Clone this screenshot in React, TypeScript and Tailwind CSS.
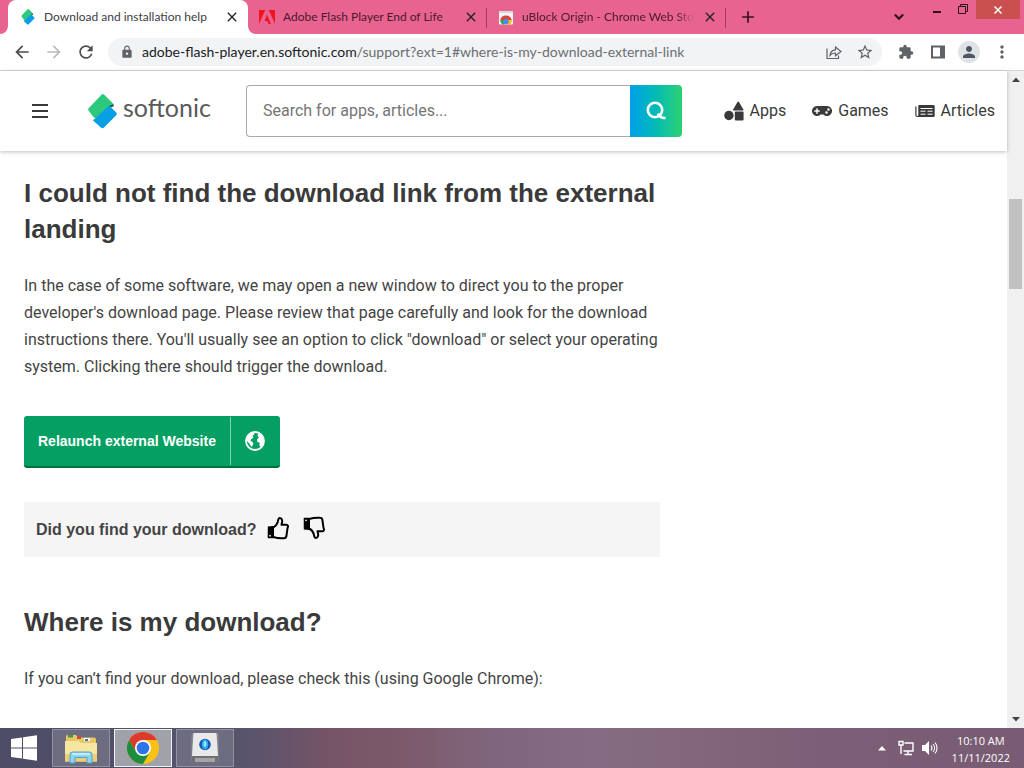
import type { ReactNode } from "react";
import {
  MdArrowBack,
  MdArrowForward,
  MdRefresh,
  MdLock,
  MdStarBorder,
  MdExtension,
  MdPerson,
  MdMoreVert,
  MdClose,
  MdAdd,
} from "react-icons/md";
import { FaGamepad } from "react-icons/fa";

function SoftonicMark({ className }: { className: string }) {
  return (
    <svg className={className} viewBox="0 0 29 35" aria-hidden="true">
      <path
        d="M13.5.8a2 2 0 0 1 2.8 0L25 9.400a1 1 0 0 1 .3 1L23 11.500 8 24.500 6 23.800.900 17a2.200 2.200 0 0 1 .2-3.200z"
        fill="#2cc97c"
      />
      <path d="M20.500 12.200 25.600 10v2.400l-2.600.8z" fill="#1f4f5c" />
      <path
        d="M19.800 12.800a2.200 2.200 0 0 1 3 .1l5.200 5.300a2.200 2.200 0 0 1 0 3.200L16 33.500a2.300 2.300 0 0 1-3.200 0L4.800 26.200l2.400-1.600z"
        fill="#089fe4"
      />
    </svg>
  );
}

function AdobeIcon() {
  return (
    <svg className="size-4 shrink-0" viewBox="0 0 16 16" aria-hidden="true">
      <path d="M0 1h6.200L0 15zM9.800 1H16v14zM8 5.800l4 9.200H9.500l-1.200-3H5.500z" fill="#f0141e" />
    </svg>
  );
}

function WebStoreIcon() {
  return (
    <svg className="size-4 shrink-0" viewBox="0 0 16 16" aria-hidden="true">
      <path d="M1 2h14v12.500a1 1 0 0 1-1 1H2a1 1 0 0 1-1-1z" fill="#f4f4f4" />
      <path d="M1 2h14v2H1z" fill="#d9dadd" />
      <path d="M2.200 11a6 6 0 0 1 11.600 0H8z" fill="#dc4437" />
      <path d="M2.200 11A6 6 0 0 0 4 15.500h2.500L8 11z" fill="#34a853" />
      <path d="M13.800 11a6 6 0 0 1-1.800 4.500H8L9 11z" fill="#fbc116" />
      <circle cx="8" cy="12.500" r="2.700" fill="#4a8af4" />
    </svg>
  );
}

type TabProps = { icon: ReactNode; title: string; active?: boolean; faded?: boolean };

function Tab({ icon, title, active, faded }: TabProps) {
  return (
    <div
      className={
        active
          ? "relative flex h-full w-60 items-center rounded-t-lg bg-white pr-2 pl-3 text-[#3c4043]"
          : "relative flex h-full w-[239px] items-center pr-2 pl-[11px] text-[#4a1a30]"
      }
    >
      {active && (
        <>
          <svg className="absolute bottom-0 -left-2 size-2" viewBox="0 0 8 8" aria-hidden="true">
            <path d="M8 0v8H0a8 8 0 0 0 8-8" fill="#fff" />
          </svg>
          <svg className="absolute -right-2 bottom-0 size-2" viewBox="0 0 8 8" aria-hidden="true">
            <path d="M0 0v8h8a8 8 0 0 1-8-8" fill="#fff" />
          </svg>
        </>
      )}
      {icon}
      <span
        className={
          faded
            ? "ml-2 flex-1 overflow-hidden mask-r-from-90% font-[Lato] text-[12px] whitespace-nowrap"
            : "ml-2 flex-1 overflow-hidden font-[Lato] text-[12px] whitespace-nowrap"
        }
      >
        {title}
      </span>
      <button aria-label="Close tab" className="ml-2 text-[#222]">
        <MdClose className="size-4" />
      </button>
      {!active && <span className="absolute top-2 right-0 h-5 w-px bg-[#a23c62]" />}
    </div>
  );
}

function TabStrip() {
  return (
    <div className="flex h-[34px] bg-[#e8638f] pl-2">
      <Tab active icon={<SoftonicMark className="h-4 w-4 shrink-0" />} title="Download and installation help" />
      <Tab icon={<AdobeIcon />} title="Adobe Flash Player End of Life" />
      <Tab faded icon={<WebStoreIcon />} title="uBlock Origin - Chrome Web Store" />
      <button aria-label="New tab" className="ml-3 text-[#3a0f22]">
        <MdAdd className="size-5" />
      </button>
      <div className="ml-auto flex items-start text-[#2a1019]">
        <button aria-label="Search tabs" className="mt-3 mr-7">
          <svg className="size-2.5" viewBox="0 0 10 10" fill="none" stroke="currentColor" strokeWidth="2" aria-hidden="true">
            <path d="M.8 2.500 5 6.800l4.200-4.300" />
          </svg>
        </button>
        <button aria-label="Minimize" className="mt-1 mr-4">
          <svg className="size-2.5" viewBox="0 0 10 10" aria-hidden="true">
            <path d="M1 7h8v2H1z" fill="currentColor" />
          </svg>
        </button>
        <button aria-label="Restore" className="mt-1 mr-2">
          <svg className="size-2.5" viewBox="0 0 10 10" fill="none" stroke="currentColor" aria-hidden="true">
            <path d="M.5 2.500h7v7h-7zM2.500 2.500v-2h7v7h-2" />
          </svg>
        </button>
        <button aria-label="Close" className="mr-1 flex h-[19px] w-11 items-center justify-center bg-[#c9504e] text-white">
          <svg className="size-2" viewBox="0 0 8 8" stroke="currentColor" strokeWidth="1.500" aria-hidden="true">
            <path d="m.5.5 7 7m0-7-7 7" />
          </svg>
        </button>
      </div>
    </div>
  );
}

function AddressBar() {
  return (
    <div className="flex h-[37px] items-center border-b border-[#d5d7da] bg-white pr-3 pl-3 text-[#5f6368]">
      <button aria-label="Back" className="text-[#4a4d51]">
        <MdArrowBack className="size-5" />
      </button>
      <button aria-label="Forward" className="ml-3 text-[#b9bbbe]">
        <MdArrowForward className="size-5" />
      </button>
      <button aria-label="Reload" className="ml-3 text-[#4a4d51]">
        <MdRefresh className="size-5" />
      </button>
      <div className="ml-3 flex h-7 flex-1 items-center rounded-full bg-[#f1f3f4] pr-2 pl-3">
        <MdLock className="size-3.5" />
        <a href="#where-is-my-download-external-link" className="ml-2 font-[Lato] text-sm whitespace-nowrap text-[#6b6f74]">
          <span className="text-[#202124]">adobe-flash-player.en.softonic.com</span>
          /support?ext=1#where-is-my-download-external-link
        </a>
        <button aria-label="Share this page" className="ml-auto">
          <svg className="size-4" viewBox="0 0 16 16" fill="none" stroke="currentColor" strokeWidth="1.200" aria-hidden="true">
            <path d="M1 4.500v10h11.500v-3M4 11.500C4.300 7.800 6.500 6 9.500 5.800V3l5.500 4.500-5.500 4.300V9C7 9 5.300 9.700 4 11.500z" />
          </svg>
        </button>
        <button aria-label="Bookmark this page" className="ml-3.5">
          <MdStarBorder className="size-[18px]" />
        </button>
      </div>
      <button aria-label="Extensions" className="ml-4">
        <MdExtension className="size-4" />
      </button>
      <button aria-label="Side panel" className="ml-4">
        <svg className="size-4" viewBox="0 0 16 16" aria-hidden="true">
          <path d="M1 1.500h14v13H1zm2 2v9h7v-9z" fill="currentColor" fillRule="evenodd" />
        </svg>
      </button>
      <button aria-label="Profile" className="ml-3 flex size-[22px] items-center justify-center rounded-full bg-[#dfe2e6] text-[#4d5660]">
        <MdPerson className="size-[18px]" />
      </button>
      <button aria-label="Menu" className="ml-3">
        <MdMoreVert className="size-5" />
      </button>
    </div>
  );
}

function ShapesIcon() {
  return (
    <svg className="size-5" viewBox="0 0 20 20" fill="currentColor" aria-hidden="true">
      <circle cx="4.900" cy="14.500" r="4.700" />
      <path d="M13.400 1.300a1 1 0 0 1 1.700 0l4.300 7.200a.7.7 0 0 1-.6 1H9.700a.7.7 0 0 1-.6-1z" />
      <rect x="10.800" y="10.600" width="8.800" height="8.800" rx=".8" />
    </svg>
  );
}

function ArticlesIcon() {
  return (
    <svg className="size-5" viewBox="0 0 20 20" aria-hidden="true">
      <path
        d="M4 4h14.500a1.200 1.200 0 0 1 1.200 1.200v9.600a1.200 1.200 0 0 1-1.200 1.200H2.300A2 2 0 0 1 .3 14V5.500h1.200V14a.9.9 0 0 0 1.800 0V4.700A.7.7 0 0 1 4 4z"
        fill="currentColor"
      />
      <path d="M5.500 7.500h12M5.500 10.200h5M12.500 10.200h5M5.500 13.200h5M12.500 13.200h5" stroke="#fff" strokeWidth="1" />
    </svg>
  );
}

function SiteHeader() {
  return (
    <header className="relative flex h-20 shrink-0 items-center bg-white pr-3 pl-8 text-[#3a3a3a] shadow-[0_1px_4px_rgba(0,0,0,0.25)]">
      <button aria-label="Menu">
        <svg className="size-4" viewBox="0 0 16 16" stroke="currentColor" strokeWidth="1.800" aria-hidden="true">
          <path d="M0 2h16M0 8h16M0 14h16" />
        </svg>
      </button>
      <a href="#" className="ml-10 flex w-[122px] items-center">
        <SoftonicMark className="h-[35px] w-[29px] shrink-0" />
        <span className="-mt-1.5 ml-1.5 font-[Lato] text-[25px] text-[#5a5a5a]">softonic</span>
      </a>
      <form className="ml-9 flex h-[52px] flex-1">
        <input
          type="search"
          aria-label="Search for apps, articles..."
          placeholder="Search for apps, articles..."
          className="min-w-0 flex-1 rounded-l border border-r-0 border-[#aaa] px-4 text-base placeholder:text-[#757575]"
        />
        <button
          aria-label="Search"
          className="flex w-[52px] items-center justify-center rounded-r bg-linear-to-r from-[#089fe8] to-[#2bd16f] text-white"
        >
          <svg className="size-5" viewBox="0 0 20 20" fill="none" stroke="currentColor" strokeWidth="2.600" aria-hidden="true">
            <circle cx="9" cy="9" r="7.200" />
            <path d="M12 12.500c1.500 3.500 4 4.700 7.500 4.500" />
          </svg>
        </button>
      </form>
      <nav className="ml-[42px] flex items-center gap-[26px]">
        <a href="#" className="flex items-center gap-1.5">
          <ShapesIcon />
          Apps
        </a>
        <a href="#" className="flex items-center gap-1.5">
          <FaGamepad className="size-5" />
          Games
        </a>
        <a href="#" className="flex items-center gap-1.5">
          <ArticlesIcon />
          Articles
        </a>
      </nav>
    </header>
  );
}

function GlobeIcon() {
  return (
    <svg className="size-5" viewBox="0 0 20 20" aria-hidden="true">
      <circle cx="10" cy="10" r="9" fill="none" stroke="#fff" strokeWidth="1.800" />
      <path d="M4 3.500 9 1l.3 2.300-1.800 1.500 1 1.700-2.500 2-.5 1.500 2.200 1 .8 1.800-1.800 3.200-2.600-3.700-2.900-3z" fill="#fff" />
      <path d="m13 2 4 2.500 2 4.500-.5 4-2.900 3-1.200-1.500.3-2.800-2.400-.8-.3-2.700 2-1.500-1.300-1.400z" fill="#fff" />
    </svg>
  );
}

function ThumbIcon({ className }: { className: string }) {
  return (
    <svg className={className} viewBox="0 0 22 24" aria-hidden="true">
      <path d="M.8 10.500 6 10v12.200H1.500a.8.8 0 0 1-.8-.8z" fill="#000" />
      <circle cx="3" cy="19.700" r=".9" fill="#f5f5f5" />
      <path
        d="M6 11.500c3-1.300 4.200-3.500 4.800-5.700.4-1.800.5-3.800 2-3.800 2.400 0 3 3 1.700 6.700h4.700c1.600 0 2.300 1.600 1.400 3l-1.200 8.300c-.2 1.500-1 2.200-2.500 2.200-3.900.2-7.300-.2-10.900-1.200z"
        fill="none"
        stroke="#000"
        strokeWidth="2"
        strokeLinejoin="round"
      />
    </svg>
  );
}

function Article() {
  return (
    <main className="flex-1 overflow-hidden px-6 pt-6 text-[#444]">
      <div className="max-w-[636px]">
        <h2 className="font-['Liberation_Sans'] text-[26px] leading-9 font-bold text-[#3a3a3a]">
          I could not find the download link from the external landing
        </h2>
        <p className="mt-[25px] leading-[27px]">
          In the case of some software, we may open a new window to direct you to the proper developer's download page.
          Please review that page carefully and look for the download instructions there. You'll usually see an option
          to click "download" or select your operating system. Clicking there should trigger the download.
        </p>
        <button className="mt-9 flex h-[52px] items-stretch rounded-[3px] border-b-2 border-[#04703f] bg-[#049f63] font-['Liberation_Sans'] text-[14px] font-bold text-white">
          <span className="my-px flex items-center border-r border-[#7fd0b0] px-3.5">Relaunch external Website</span>
          <span className="flex w-[49px] items-center justify-center">
            <GlobeIcon />
          </span>
        </button>
        <div className="mt-[34px] flex h-[55px] items-center bg-[#f5f5f5] px-3 font-['Liberation_Sans']">
          <strong>Did you find your download?</strong>
          <span className="ml-[11px] flex gap-3.5 pb-1">
            <button aria-label="Yes">
              <ThumbIcon className="h-6 w-[22px]" />
            </button>
            <button aria-label="No">
              <ThumbIcon className="h-6 w-[22px] -scale-y-100" />
            </button>
          </span>
        </div>
        <h2 className="mt-[47px] font-['Liberation_Sans'] text-[26px] leading-9 font-bold text-[#3a3a3a]">
          Where is my download?
        </h2>
        <p className="mt-[25px] leading-[27px]">If you can’t find your download, please check this (using Google Chrome):</p>
      </div>
    </main>
  );
}

function Scrollbar() {
  return (
    <div className="flex w-[17px] shrink-0 flex-col items-center bg-[#f0f0f0] text-[#444]">
      <svg className="h-[17px] w-2" viewBox="0 0 8 17" fill="currentColor" aria-hidden="true">
        <path d="M0 11h8L4 6.500z" />
      </svg>
      <div className="mt-[111px] h-[90px] w-[13px] bg-[#c1c1c1]" />
      <svg className="mt-auto h-[17px] w-2" viewBox="0 0 8 17" fill="currentColor" aria-hidden="true">
        <path d="M0 6h8l-4 4.500z" />
      </svg>
    </div>
  );
}

function FolderIcon() {
  return (
    <svg className="h-8 w-9" viewBox="0 0 36 32" aria-hidden="true">
      <path d="M3 4.500A1.500 1.500 0 0 1 4.500 3H13l2 2.500h16a2 2 0 0 1 2 2V29H3z" fill="#e8c766" />
      <path d="M5 3h5v2.500H5z" fill="#3d9a4b" />
      <path d="M14 4.500h4V7h-4z" fill="#d5442f" />
      <path d="M21 6h6v3h-6z" fill="#f7f7f4" />
      <path d="M22 7h3v2h-3z" fill="#4273c9" />
      <path d="M2 9h14l2 2h16v18.500H2z" fill="#f6e6a0" />
      <path d="M2 22h32v7.500H2z" fill="#e9cf78" />
      <path d="M7 31V22.500A2.500 2.500 0 0 1 9.500 20h17a2.500 2.500 0 0 1 2.500 2.500V31h-5v-5.500H12V31z" fill="#8fd3ee" stroke="#4ea3cb" />
      <path d="M9 22h18" stroke="#d9f4fd" strokeWidth="1.500" />
    </svg>
  );
}

function ChromeIcon() {
  return (
    <svg className="size-8" viewBox="0 0 48 48" aria-hidden="true">
      <circle cx="24" cy="24" r="24" fill="#fbc116" />
      <path d="M3.200 12a24 24 0 0 1 41.600 0H24v12l-10.400 6z" fill="#dc3a2d" />
      <path d="M3.200 12 13.600 30l10.400 6 10.400-6-10.400 18A24 24 0 0 1 3.200 12" fill="#1e8e3e" />
      <circle cx="24" cy="24" r="12" fill="#fff" />
      <circle cx="24" cy="24" r="9.500" fill="#2b75e8" />
    </svg>
  );
}

function DriveIcon() {
  return (
    <svg className="h-8 w-7" viewBox="0 0 28 32" aria-hidden="true">
      <rect x=".5" y="1" width="27" height="30" rx="2" fill="#8a8a8e" />
      <path d="M2.500 1h23L27 24H1z" fill="#e9e9eb" />
      <path d="M1 24h26v6a1 1 0 0 1-1 1H2a1 1 0 0 1-1-1z" fill="#6f6f74" />
      <path d="M4 26h20v4H4z" fill="#a5a5a9" />
      <circle cx="14" cy="12.500" r="5.800" fill="#1559ad" />
      <ellipse cx="14" cy="12.500" rx="3.200" ry="5" fill="#31b0f2" />
      <ellipse cx="14" cy="12" rx="1.300" ry="3" fill="#a5e0fb" />
    </svg>
  );
}

function Taskbar() {
  return (
    <footer className="flex h-10 shrink-0 items-center bg-[linear-gradient(90deg,#4d4c64_0%,#57546c_24%,#765467_32%,#7b5869_38%,#80667c_48%,#866c82_58%,#7c5f76_80%,#785c73_100%)] text-white">
      <button aria-label="Start" className="ml-[11px]">
        <svg className="size-[26px]" viewBox="0 0 26 26" fill="#fff" aria-hidden="true">
          <path d="m0 4 11-1.500v10H0zM12 2.300 26 .3v12.200H12zM0 13.500h11v10L0 22zM12 13.500h14v12.200l-14-2z" />
        </svg>
      </button>
      <div className="ml-[15px] flex gap-1">
        <button aria-label="File Explorer" className="flex h-[38px] w-[58px] items-center justify-center border border-[#9392a2] bg-[#6d6c80]">
          <FolderIcon />
        </button>
        <button aria-label="Google Chrome" className="flex h-[38px] w-[58px] items-center justify-center border border-[#f2f2f5] bg-[#a1a1aa]">
          <ChromeIcon />
        </button>
        <button aria-label="Drive" className="flex h-[38px] w-[58px] items-center justify-center border border-[#9392a2] bg-[#6d6c80]">
          <DriveIcon />
        </button>
      </div>
      <div className="mr-3.5 ml-auto flex items-center">
        <button aria-label="Show hidden icons">
          <svg className="size-2" viewBox="0 0 8 8" fill="#fff" aria-hidden="true">
            <path d="M0 6.500h8L4 2z" />
          </svg>
        </button>
        <svg className="ml-3 size-4" viewBox="0 0 16 16" fill="none" stroke="#fff" strokeWidth="1.400" aria-hidden="true">
          <path d="M6.500 3H15v8H5.500M10 11v3M6.500 14.500H14M1 1.500h4V5H1zM3 5v9" />
        </svg>
        <svg className="ml-2 size-4" viewBox="0 0 16 16" fill="none" stroke="#fff" strokeWidth="1.100" aria-hidden="true">
          <path d="M0 5h3l4-4v14l-4-4H0z" fill="#fff" stroke="none" />
          <path d="M9 5.500a4 4 0 0 1 0 5M11 4a6 6 0 0 1 0 8M13 2.500a8.500 8.500 0 0 1 0 11" />
        </svg>
        <div className="ml-3.5 pt-0.5 text-center text-[11px] leading-[17px]">
          <p>10:10 AM</p>
          <p>11/11/2022</p>
        </div>
      </div>
    </footer>
  );
}

export default function App() {
  return (
    <div className="flex h-screen flex-col overflow-hidden bg-white font-['Open_Sans',sans-serif]">
      <TabStrip />
      <AddressBar />
      <div className="flex min-h-0 flex-1">
        <div className="flex min-w-0 flex-1 flex-col font-[Roboto,sans-serif]">
          <SiteHeader />
          <Article />
        </div>
        <Scrollbar />
      </div>
      <Taskbar />
    </div>
  );
}
